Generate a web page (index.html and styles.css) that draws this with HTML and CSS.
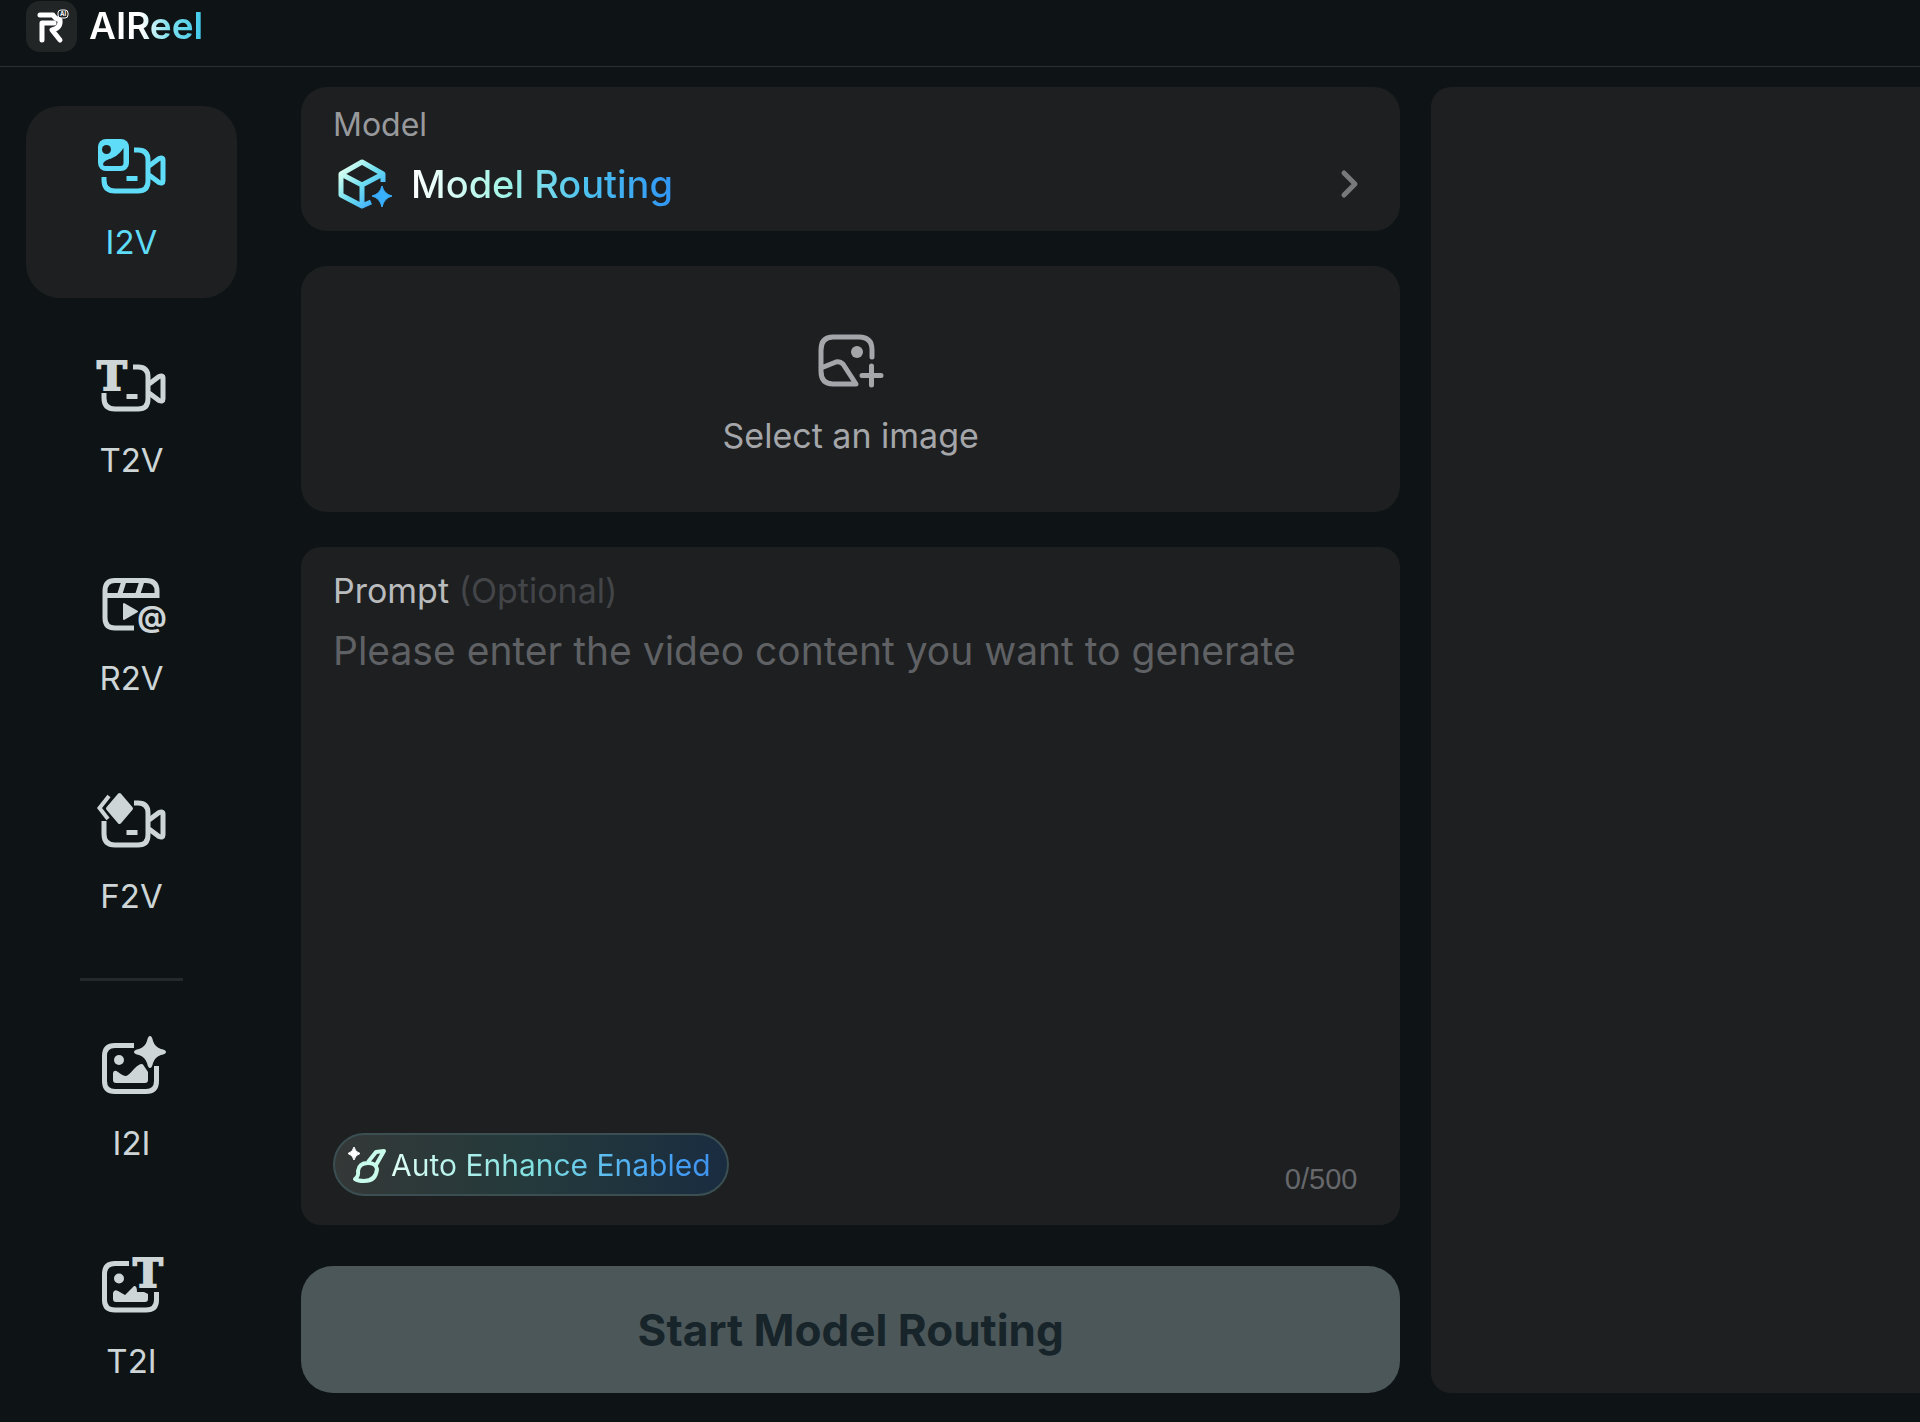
FILE: index.html
```html
<!DOCTYPE html>
<html lang="en">
<head>
    <meta charset="UTF-8">
    <meta name="viewport" content="width=device-width, initial-scale=1.0">
    <title>AIReel - Model Routing</title>
    <link rel="stylesheet" href="styles.css">
</head>
<body>
    <header>
        <a class="brand" href="#">
            <svg class="logo" viewBox="0 0 51 51" aria-hidden="true">
                <rect width="51" height="51" rx="14" fill="#212526"/>
                <g fill="none" stroke="#fff" stroke-width="5" stroke-linecap="round" stroke-linejoin="round">
                    <path d="M14 14H27Q29 18 34 19Q35 27 26 29L34 39"/>
                    <path d="M16 39V22H28"/>
                </g>
                <rect x="32" y="9" width="10" height="8" rx="3" fill="#212526" stroke="#fff"/>
                <text x="37" y="15" text-anchor="middle" class="logo-tag">AI</text>
            </svg>
            <span class="brand-name">AIReel</span>
        </a>
    </header>

    <div class="layout">
        <nav>
            <a class="nav-item active" href="#">
                <svg class="nav-icon" viewBox="0 0 72 60" aria-hidden="true">
                    <rect x="2" y="2" width="31" height="32" rx="8" fill="currentColor"/>
                    <circle cx="10.5" cy="12.5" r="4.5" fill="#1e1f21"/>
                    <path d="M7 27C10 20 18 25 27.5 11V26Q27.5 29 24.500 29H9Q7 29 7 27Z" fill="#1e1f21"/>
                    <g class="line">
                        <path d="M38 13H42Q52 13 52 23V44Q52 54 42 54H19Q8 54 8 43V40"/>
                        <path d="M30.500 41.500H41.500"/>
                        <path d="M53 29L63 21.500Q67 20 67 23V44Q67 47 63 45.500L53 38"/>
                    </g>
                </svg>
                <span>I2V</span>
            </a>
            <a class="nav-item" href="#">
                <svg class="nav-icon" viewBox="0 0 72 60" aria-hidden="true">
                    <text x="16" y="35" text-anchor="middle" class="icon-t">T</text>
                    <g class="line">
                        <path d="M37 12H42Q52 12 52 22V44Q52 54 42 54H19Q8 54 8 43V38"/>
                        <path d="M30.500 41.500H41.500"/>
                        <path d="M53 29L63 21.500Q67 20 67 23V44Q67 47 63 45.500L53 38"/>
                    </g>
                </svg>
                <span>T2V</span>
            </a>
            <a class="nav-item" href="#">
                <svg class="nav-icon" viewBox="0 0 72 60" aria-hidden="true">
                    <g class="line">
                        <path d="M61 25V18Q61 7.500 50 7.500H19Q9 7.500 9 18V45Q9 55 19 55H38"/>
                        <path d="M9 22.500H61M28 8L23.500 22M46 8L41.500 22"/>
                    </g>
                    <path d="M28 31V46L41 38.500Z" fill="currentColor" stroke="currentColor" stroke-width="2" stroke-linejoin="round"/>
                    <text x="56" y="54" text-anchor="middle" class="icon-at">@</text>
                </svg>
                <span>R2V</span>
            </a>
            <a class="nav-item" href="#">
                <svg class="nav-icon" viewBox="0 0 72 60" aria-hidden="true">
                    <path d="M23.500 4L35 17.500L23.500 31L12 17.500Z" fill="currentColor" stroke="currentColor" stroke-width="4" stroke-linejoin="round"/>
                    <path d="M13 5L3.500 17L12 28" fill="none" stroke="currentColor" stroke-width="4"/>
                    <g class="line">
                        <path d="M38 12H42Q52 12 52 22V44Q52 54 42 54H19Q8 54 8 43V30"/>
                        <path d="M30.500 41.500H41.500"/>
                        <path d="M53 29L63 21.500Q67 20 67 23V44Q67 47 63 45.500L53 38"/>
                    </g>
                </svg>
                <span>F2V</span>
            </a>
            <hr>
            <a class="nav-item" href="#">
                <svg class="nav-icon" viewBox="0 0 72 60" aria-hidden="true">
                    <path class="line" d="M38 7.500H19Q8.500 7.500 8.500 18V43Q8.500 53.500 19 53.500H50Q60.500 53.500 60.500 43V28"/>
                    <circle cx="23" cy="22" r="5" fill="currentColor"/>
                    <path d="M17 42V35Q18 31 22 34Q27 38 30 38Q32 38 38 31Q46 23 48 28L52 34V42Q52 45 49 45H20Q17 45 17 42Z" fill="currentColor"/>
                    <path d="M54 -2Q56 -2 57 3Q59 9 65 11Q70 12 70 14Q70 16 65 17Q59 19 57 25Q56 30 54 30Q52 30 51 25Q49 19 43 17Q38 16 38 14Q38 12 43 11Q49 9 51 3Q52 -2 54 -2Z" fill="currentColor"/>
                </svg>
                <span>I2I</span>
            </a>
            <a class="nav-item" href="#">
                <svg class="nav-icon" viewBox="0 0 72 60" aria-hidden="true">
                    <path class="line" d="M33 7.500H19Q8.500 7.500 8.500 18V44Q8.500 54 19 54H50Q60.500 54 60.500 44V36"/>
                    <circle cx="23" cy="22.500" r="5" fill="currentColor"/>
                    <path d="M17 43V37Q18 33 22 35L29 39L38 30Q41 29 41 36H48L52 38V43Q52 46 49 46H20Q17 46 17 43Z" fill="currentColor"/>
                    <text x="52" y="31" text-anchor="middle" class="icon-t">T</text>
                </svg>
                <span>T2I</span>
            </a>
        </nav>

        <main>
            <button class="card model" type="button">
                <span class="model-label">Model</span>
                <span class="model-row">
                    <svg class="model-icon" viewBox="0 0 56 52" aria-hidden="true">
                        <defs>
                            <linearGradient id="cube" x1="0" y1="0" x2="1" y2="1">
                                <stop offset="0.1" stop-color="#d9fff0"/>
                                <stop offset="0.5" stop-color="#6fdff0"/>
                                <stop offset="1" stop-color="#2f9dff"/>
                            </linearGradient>
                        </defs>
                        <path d="M46 24V16L25 4L4 16V37L25 48L34 44M4 16L25 27L46 16M25 27V48" fill="none" stroke="url(#cube)" stroke-width="5" stroke-linejoin="round"/>
                        <path d="M45 28Q47 36 55 38Q47 40 45 49Q43 40 35 38Q43 36 45 28Z" fill="#38b0ff" stroke="#38b0ff"/>
                    </svg>
                    <span class="model-name">Model Routing</span>
                    <svg class="chevron" viewBox="0 0 20 32" aria-hidden="true">
                        <path d="M4 5L15 16L4 27" fill="none" stroke="#77797b" stroke-width="5" stroke-linecap="round" stroke-linejoin="round"/>
                    </svg>
                </span>
            </button>

            <button class="card upload" type="button">
                <svg class="upload-icon" viewBox="0 0 72 56" aria-hidden="true">
                    <g fill="none" stroke="currentColor" stroke-width="5" stroke-linecap="round" stroke-linejoin="round">
                        <path d="M57 24V17Q57 4 44 4H18Q6 4 6 17V38Q6 51 18 51H41L28 31Q25 28 21 29L6 35"/>
                        <path d="M56.500 33V52M47 42.500H66"/>
                    </g>
                    <circle cx="42" cy="19" r="6" fill="currentColor"/>
                </svg>
                <span>Select an image</span>
            </button>

            <section class="card prompt">
                <label for="prompt">Prompt <span class="optional">(Optional)</span></label>
                <textarea id="prompt" maxlength="500" placeholder="Please enter the video content you want to generate"></textarea>
                <div class="prompt-footer">
                    <button class="enhance" type="button">
                        <svg class="enhance-icon" viewBox="0 0 40 40" aria-hidden="true">
                            <path d="M7 2Q8 7 13 8.500Q8 10 7 15Q6 10 1 8.500Q6 7 7 2Z" fill="#fff" stroke="#fff"/>
                            <path d="M8 34Q12 31 11 26Q12 18 21 18Q29 18 30 24Q29 36 17 36Q11 36 8 34ZM21 17L29 7L37 6L29 20" fill="none" stroke="#c9fbea" stroke-width="4" stroke-linejoin="round"/>
                        </svg>
                        <span>Auto Enhance Enabled</span>
                    </button>
                    <span class="counter">0/500</span>
                </div>
            </section>

            <button class="start" type="button">Start Model Routing</button>
        </main>

        <aside class="preview"></aside>
    </div>
</body>
</html>
```

FILE: styles.css
```css
* {
    box-sizing: border-box;
}
body {
    font-family: Inter, "Open Sans", sans-serif;
    margin: 0;
    min-height: 100vh;
    display: flex;
    flex-direction: column;
    background-color: #0e1415;
    color: #c9cfd1;
}
button {
    font-family: inherit;
    border: none;
    cursor: pointer;
}
header {
    height: 67px;
    padding: 0 26px;
    border-bottom: 1px solid #2a2f30;
}
.brand {
    display: inline-flex;
    align-items: center;
    gap: 12px;
    text-decoration: none;
}
.logo {
    width: 51px;
    height: 51px;
}
.logo-tag {
    font-size: 6px;
    font-weight: 700;
    fill: #fff;
}
.brand-name {
    font-size: 37px;
    line-height: 52px;
    font-weight: 600;
    background: linear-gradient(90deg, #fff 45%, #7fe0ee 70%, #3fc9ea);
    background-clip: text;
    color: transparent;
}
.layout {
    flex: 1;
    display: flex;
    padding: 20px 0 0 26px;
}
nav {
    width: 211px;
    padding-top: 19px;
    display: flex;
    flex-direction: column;
    gap: 26px;
}
.nav-item {
    height: 192px;
    padding-top: 31px;
    border-radius: 34px;
    display: flex;
    flex-direction: column;
    align-items: center;
    gap: 25px;
    color: #cdd5d7;
    font-size: 33px;
    line-height: 40px;
    text-decoration: none;
}
.nav-item.active {
    background-color: #1e1f21;
    color: #5fdcf7;
}
.nav-icon {
    width: 72px;
    height: 60px;
    overflow: visible;
}
.line {
    fill: none;
    stroke: currentColor;
    stroke-width: 5px;
    stroke-linejoin: round;
}
.icon-t {
    font-family: "DejaVu Serif", serif;
    font-size: 40px;
    font-weight: 700;
    fill: currentColor;
    stroke: currentColor;
    stroke-width: 2px;
}
.icon-at {
    font-size: 29px;
    font-weight: 700;
    fill: currentColor;
}
hr {
    width: 103px;
    height: 3px;
    margin: 0 auto;
    border: none;
    background-color: #24292a;
}
main {
    flex: 9;
    margin: 0 31px 29px 64px;
    display: flex;
    flex-direction: column;
}
.card {
    background-color: #1e1f21;
    border-radius: 26px;
    margin-bottom: 35px;
}
.model {
    height: 144px;
    padding: 18px 32px;
    display: flex;
    flex-direction: column;
    gap: 13px;
    text-align: left;
}
.model-label {
    font-size: 32px;
    line-height: 40px;
    color: #98999c;
}
.model-row {
    width: 100%;
    display: flex;
    align-items: center;
}
.model-icon {
    width: 56px;
    height: 52px;
    margin: 0 18px 0 4px;
}
.model-name {
    font-size: 38px;
    line-height: 52px;
    font-weight: 500;
    background: linear-gradient(90deg, #fff, #a5f5e6 35%, #4fc4ee 65%, #2f95f5);
    background-clip: text;
    color: transparent;
}
.chevron {
    width: 20px;
    height: 32px;
    margin-left: auto;
    margin-right: 8px;
}
.upload {
    height: 246px;
    padding: 10px 0 0;
    display: flex;
    flex-direction: column;
    align-items: center;
    justify-content: center;
    gap: 27px;
    color: #a4a6a9;
    font-size: 34px;
    line-height: 40px;
}
.upload-icon {
    width: 72px;
    height: 56px;
}
.prompt {
    flex: 1;
    padding: 24px 32px 29px;
    margin-bottom: 41px;
    border-radius: 20px;
    display: flex;
    flex-direction: column;
}
.prompt label {
    font-size: 34px;
    line-height: 40px;
    color: #b9bbbd;
}
.optional {
    color: #434548;
}
textarea {
    flex: 1;
    margin-top: 16px;
    padding: 0;
    border: none;
    outline: none;
    resize: none;
    background: none;
    color: #c9cfd1;
    font-family: inherit;
    font-size: 39px;
    line-height: 48px;
}
textarea::placeholder {
    color: #5f6164;
}
.prompt-footer {
    display: flex;
    align-items: flex-end;
    justify-content: space-between;
}
.enhance {
    height: 63px;
    padding: 0 16px 0 12px;
    display: flex;
    align-items: center;
    gap: 4px;
    border: 2px solid #3b4f53;
    border-radius: 32px;
    background: linear-gradient(90deg, #343837, #243a3c 50%, #1a2c40);
}
.enhance-icon {
    width: 40px;
    height: 40px;
}
.enhance span {
    font-size: 30px;
    line-height: 40px;
    background: linear-gradient(90deg, #dffff5, #7fe0e0 45%, #4aa8f5 80%, #3f93f0);
    background-clip: text;
    color: transparent;
}
.counter {
    margin-right: 11px;
    font-family: "Liberation Sans", Arial, sans-serif;
    font-size: 29px;
    line-height: 34px;
    color: #66686b;
}
.start {
    height: 127px;
    border-radius: 32px;
    background-color: #4c5759;
    color: #17242a;
    font-size: 44px;
    font-weight: 700;
}
.preview {
    flex: 4;
    margin-bottom: 29px;
    background-color: #1e1f21;
    border-radius: 20px 0 0 20px;
}
```
